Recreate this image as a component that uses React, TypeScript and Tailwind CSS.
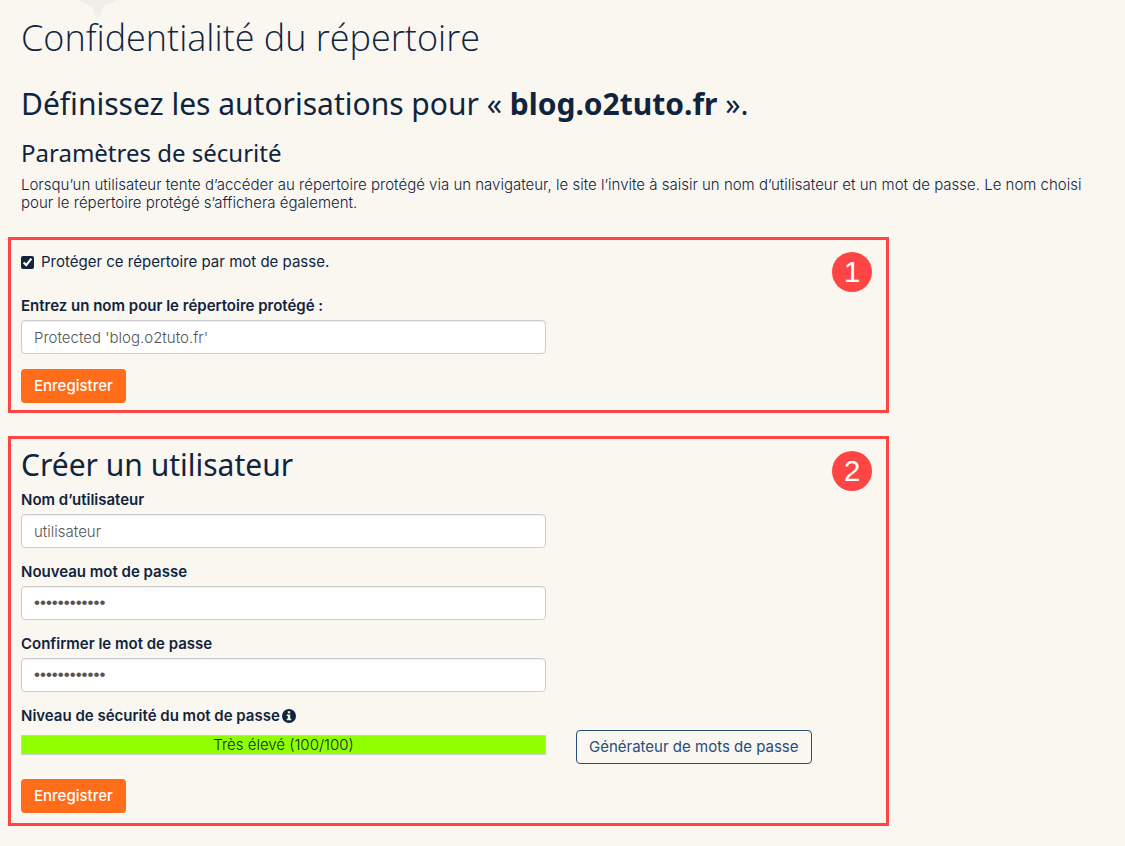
import { useState } from "react";
import type { ReactNode } from "react";

const inputClass =
  "block h-[34px] w-full rounded border border-[#cccccc] bg-white px-3 font-light text-[#555555] shadow-[inset_0_1px_1px_rgba(0,0,0,0.075)] outline-none focus:border-[#10243e]";

function Star() {
  return (
    <svg className="absolute left-20 top-0 h-[18px] w-9" viewBox="0 0 36 18" fill="#f0eeea" aria-hidden="true">
      <path d="M0 0H36Q35 3 29 4Q23 5 22 9Q21 17 17.500 17Q14 17 13 9Q12 5 6 4Q1 3 0 0Z" />
    </svg>
  );
}

function InfoIcon() {
  return (
    <svg className="size-[14px]" viewBox="0 0 14 14" aria-hidden="true">
      <circle cx="7" cy="7" r="7" fill="#10243e" />
      <path d="M5.800 2.200H8.200V4.200H5.800ZM4.700 5.400H8.200V9.700H9.300V11.300H4.700V9.700H5.800V7H4.700Z" fill="#faf7f0" />
    </svg>
  );
}

function Panel({ step, className, children }: { step: number; className: string; children: ReactNode }) {
  return (
    <section className={`relative w-full max-w-[881px] border-[3px] border-[#ff4444] px-[10px] ${className}`}>
      <span className="absolute right-[14px] top-3 flex size-10 items-center justify-center rounded-full bg-[#ff4444] font-['Liberation_Sans',sans-serif] text-[30px] leading-10 text-white">
        {step}
      </span>
      {children}
    </section>
  );
}

function SaveButton() {
  return (
    <button
      type="submit"
      className="block h-[34px] rounded bg-[#ff6c1a] px-[13px] font-medium text-white hover:bg-[#e85c0e]"
    >
      Enregistrer
    </button>
  );
}

type FieldProps = {
  id: string;
  label: string;
  type?: string;
  value: string;
  onChange: (value: string) => void;
};

function Field({ id, label, type = "text", value, onChange }: FieldProps) {
  const secret = type === "password" ? "font-['Liberation_Sans',sans-serif] text-[17px]" : "text-[15px]";
  return (
    <div className="mb-[15px] w-full max-w-[525px]">
      <label htmlFor={id} className="mb-[6px] block font-semibold leading-[17px]">
        {label}
      </label>
      <input
        id={id}
        type={type}
        value={value}
        onChange={(e) => onChange(e.target.value)}
        autoComplete="off"
        className={`${inputClass} ${secret}`}
      />
    </div>
  );
}

export default function App() {
  const [isProtected, setProtected] = useState(true);
  const [directory, setDirectory] = useState("Protected 'blog.o2tuto.fr'");
  const [user, setUser] = useState("utilisateur");
  const [password, setPassword] = useState("motdepasse12");
  const [confirm, setConfirm] = useState("motdepasse12");

  return (
    <main className="relative min-h-screen bg-[#faf7f0] px-2 pb-5 font-['Inter',sans-serif] text-[15px] leading-[18px] text-[#10243e]">
      <Star />
      <header className="px-[13px] pt-3">
        <h1 className="font-['Open_Sans',sans-serif] text-[36px] font-light leading-[52px]">
          Confidentialité du répertoire
        </h1>
        <h2 className="mt-5 font-['Noto_Sans',sans-serif] text-[30px] leading-10">
          Définissez les autorisations pour « <strong className="font-bold">blog.o2tuto.fr</strong> ».
        </h2>
        <h3 className="mt-[13px] font-['Noto_Sans',sans-serif] text-[24px] leading-8">Paramètres de sécurité</h3>
      </header>
      <p className="mb-[25px] mt-[7px] px-[13px] font-light">
        Lorsqu’un utilisateur tente d’accéder au répertoire protégé via un navigateur, le site l’invite à saisir un nom
        d’utilisateur et un mot de passe. Le nom choisi pour le répertoire protégé s’affichera également.
      </p>

      <Panel step={1} className="pb-[7px] pt-3">
        <form onSubmit={(e) => e.preventDefault()}>
          <label className="mb-[25px] flex items-center gap-[7px] leading-5">
            <input
              type="checkbox"
              checked={isProtected}
              onChange={(e) => setProtected(e.target.checked)}
              className="size-[13px] accent-[#10243e]"
            />
            Protéger ce répertoire par mot de passe.
          </label>
          <Field
            id="directory"
            label="Entrez un nom pour le répertoire protégé :"
            value={directory}
            onChange={setDirectory}
          />
          <SaveButton />
        </form>
      </Panel>

      <Panel step={2} className="mt-[23px] pb-[10px] pt-[6px]">
        <form onSubmit={(e) => e.preventDefault()}>
          <h2 className="mb-[6px] font-['Noto_Sans',sans-serif] text-[30px] leading-10">Créer un utilisateur</h2>
          <Field id="user" label="Nom d’utilisateur" value={user} onChange={setUser} />
          <Field id="password" label="Nouveau mot de passe" type="password" value={password} onChange={setPassword} />
          <Field id="confirm" label="Confirmer le mot de passe" type="password" value={confirm} onChange={setConfirm} />
          <div className="mb-[15px] flex flex-wrap items-end gap-x-[30px]">
            <div className="w-full max-w-[525px] pb-[9px]">
              <p className="mb-[11px] flex items-center gap-[2px] font-semibold leading-[17px]">
                Niveau de sécurité du mot de passe <InfoIcon />
              </p>
              <div className="h-5 border border-[#cccccc] bg-[#90ff00] text-center font-light">Très élevé (100/100)</div>
            </div>
            <button
              type="button"
              className="h-[34px] rounded border border-[#264d7e] px-3 text-[#264d7e] hover:bg-white"
            >
              Générateur de mots de passe
            </button>
          </div>
          <SaveButton />
        </form>
      </Panel>
    </main>
  );
}
